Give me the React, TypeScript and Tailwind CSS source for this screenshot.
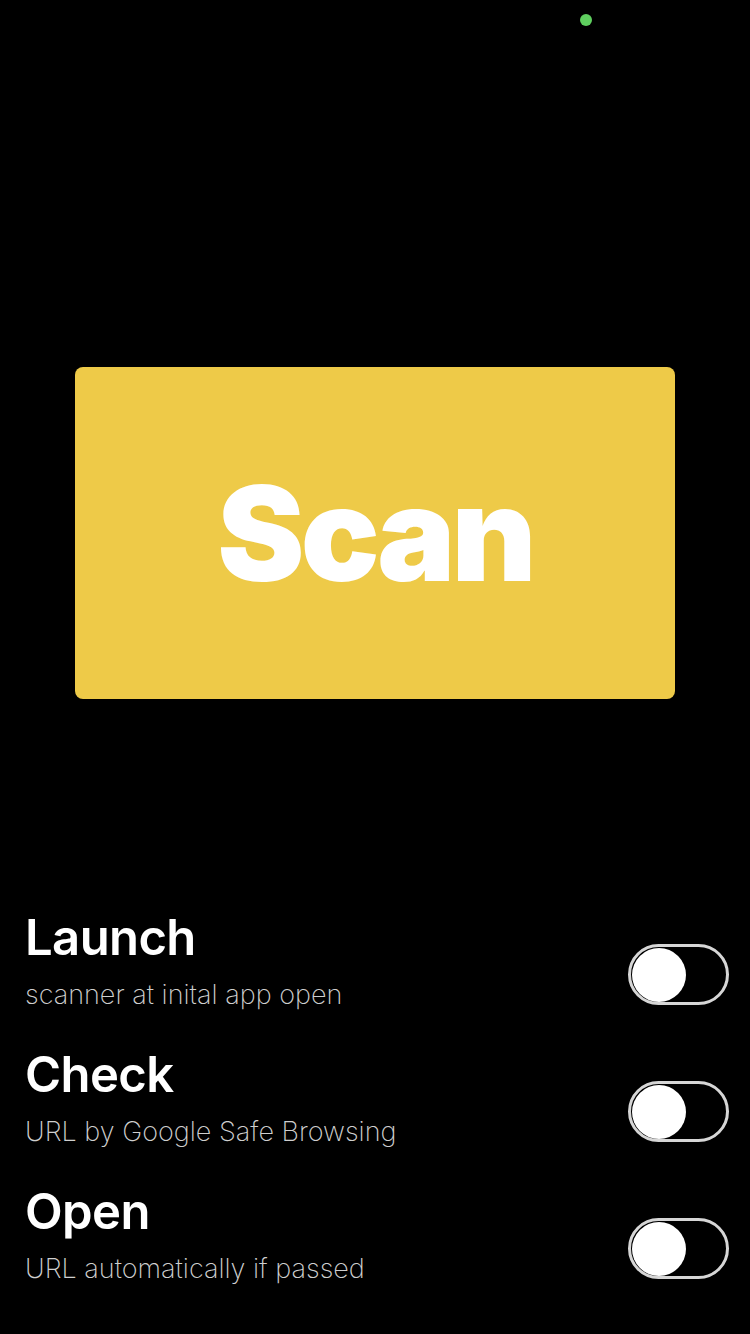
import { useState } from "react"

const settings = [
  { title: "Launch", desc: "scanner at inital app open" },
  { title: "Check", desc: "URL by Google Safe Browsing" },
  { title: "Open", desc: "URL automatically if passed" },
]

function Toggle({ on, onChange }: { on: boolean; onChange: () => void }) {
  return (
    <button
      onClick={onChange}
      className={`mt-[35px] flex h-[61px] w-[101px] shrink-0 items-center rounded-full border-[3px] border-[#d6d6d6] px-[1px] ${
        on ? "justify-end bg-[#4cd964]" : "justify-start bg-black"
      }`}
    >
      <span className="block h-[54px] w-[54px] rounded-full bg-white" />
    </button>
  )
}

export default function App() {
  const [state, setState] = useState([false, false, false])

  return (
    <div
      className="relative flex h-[1334px] w-[750px] flex-col bg-black text-white"
      style={{ fontFamily: "Inter, 'Noto Sans', sans-serif" }}
    >
      {/* status dot */}
      <span className="absolute left-[580px] top-[14px] h-[12px] w-[12px] rounded-full bg-[#5fcf5f]" />

      <div className="mx-[75px] mt-[367px] flex h-[332px] items-center justify-center rounded-[8px] bg-[#eeca48]">
        <span className="text-[131px] font-black leading-none tracking-[-3.8px] text-white">Scan</span>
      </div>

      <div className="mt-[210px] flex flex-col gap-[34px] pl-[25px] pr-[21px]">
        {settings.map((s, i) => (
          <div key={s.title} className="flex items-start justify-between">
            <div className="flex flex-col">
              <span className="text-[49px] font-semibold leading-[58px] tracking-[-0.6px]">{s.title}</span>
              <span className="mt-[11px] text-[27px] font-extralight leading-[34px] text-[#cfcfcf]">{s.desc}</span>
            </div>
            <Toggle on={state[i]} onChange={() => setState(state.map((v, j) => (j === i ? !v : v)))} />
          </div>
        ))}
      </div>
    </div>
  )
}
